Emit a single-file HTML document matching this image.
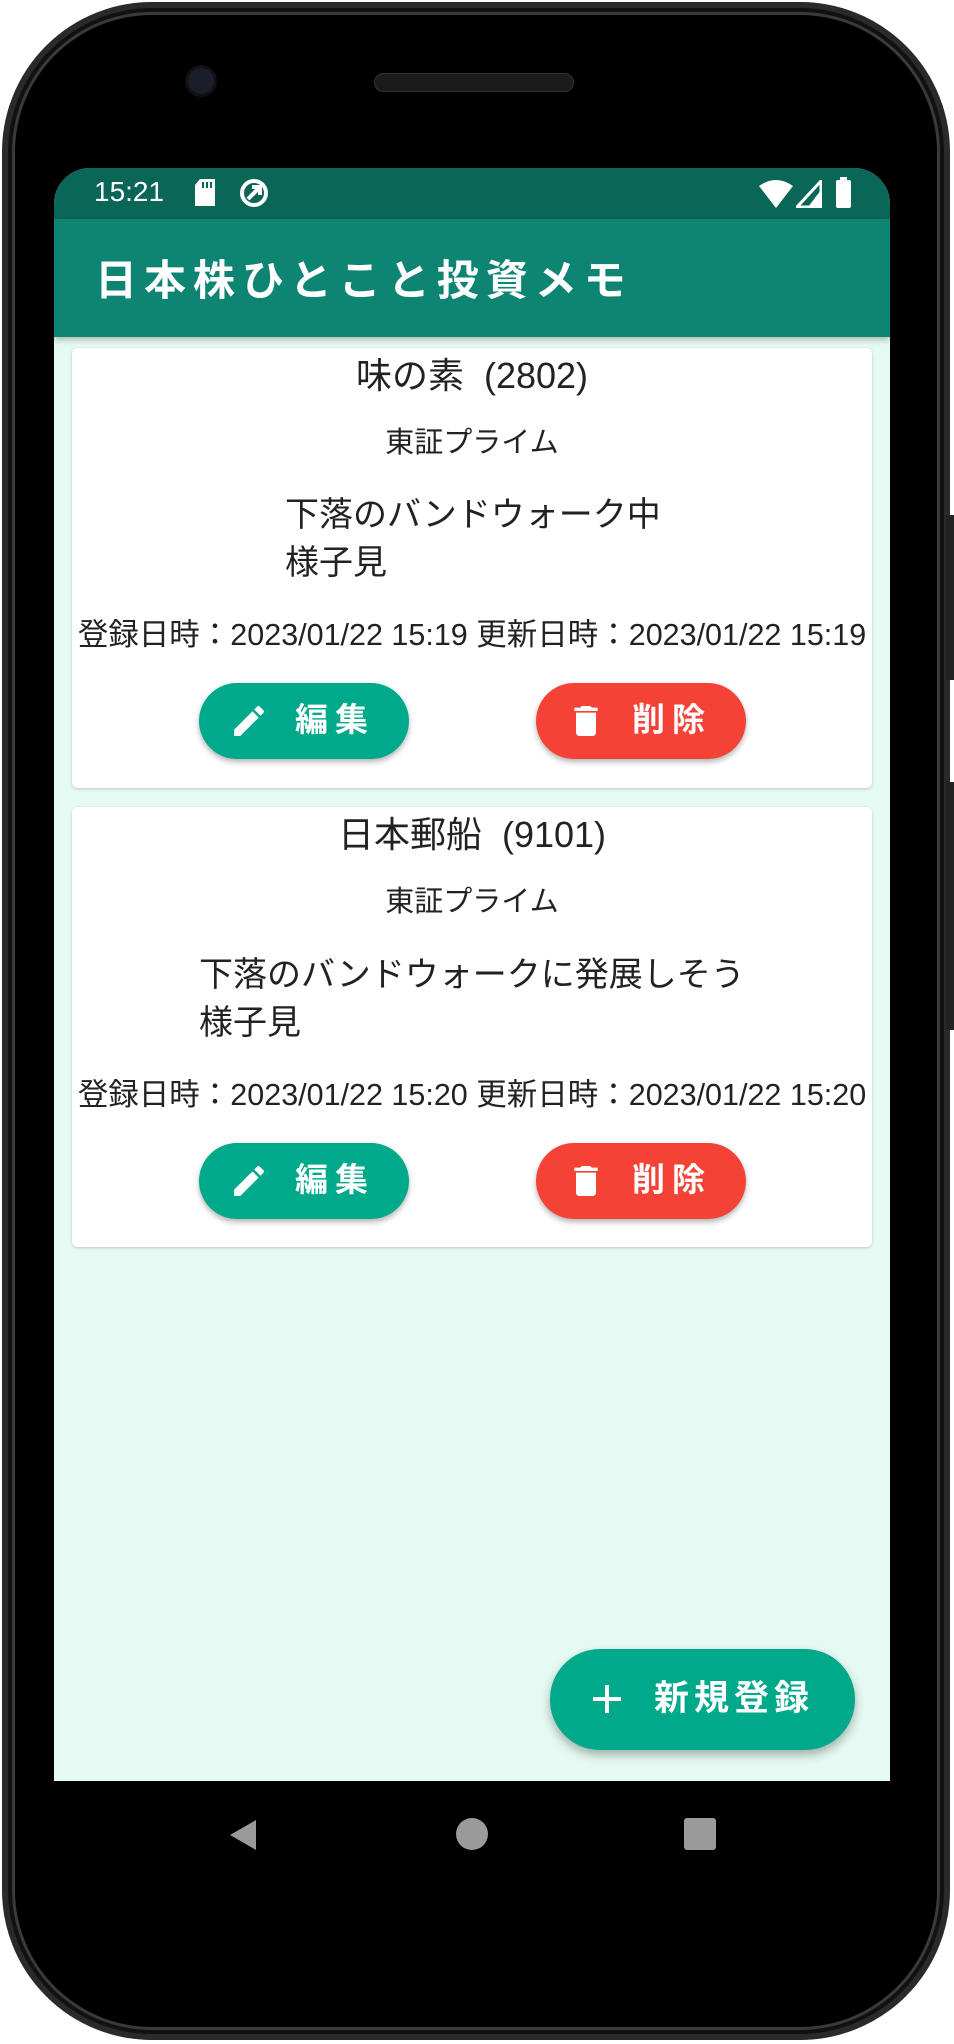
<!DOCTYPE html>
<html><head><meta charset="utf-8"><style>
*{margin:0;padding:0;box-sizing:border-box}
body{width:954px;height:2044px;background:#fff;position:relative;overflow:hidden;font-family:"Liberation Sans","Noto Sans CJK JP",sans-serif}
.phone{position:absolute;left:2px;top:2px;width:948px;height:2038px;border-radius:150px;background:#000;border:6px solid #2a2a2a;box-shadow:inset 0 0 0 4px #111,inset 0 0 0 7px #3a3a3a}
.btnside{position:absolute;background:#222;width:8px;right:0}
.screen{position:absolute;left:54px;top:168px;width:836px;height:1613px;background:#e6faf4;border-radius:36px 36px 0 0;overflow:hidden}
.status{position:absolute;left:0;top:0;width:836px;height:51px;background:#0a6656;color:#fff}
.appbar{position:absolute;left:0;top:51px;width:836px;height:118px;background:#0e8473;box-shadow:0 3px 6px rgba(0,0,0,.25)}
.appbar h1{position:absolute;left:41px;top:28px;font-size:42px;font-weight:bold;color:#fff;letter-spacing:7px;white-space:nowrap}
.card{position:absolute;left:18px;width:800px;background:#fff;border-radius:6px;box-shadow:0 1px 3px rgba(0,0,0,.2)}
.t{position:absolute;left:0;width:100%;text-align:center;color:#222;white-space:nowrap}
.memo{position:absolute;font-size:34px;line-height:48px;color:#222;white-space:nowrap}
.btn{position:absolute;width:210px;height:76px;border-radius:38px;color:#fff;font-weight:bold;font-size:33px;letter-spacing:7px;box-shadow:0 3px 6px rgba(0,0,0,.3)}
.btn span{position:absolute;left:96px;top:17px;line-height:40px}
.btn svg{position:absolute;left:30px;top:18px}
.g{background:#00a98a}.r{background:#f44336}
.d{font-size:30.5px;letter-spacing:0}
</style></head><body>
<div class="phone"></div>
<div class="btnside" style="top:515px;height:165px;right:0"></div>
<div class="btnside" style="top:782px;height:248px;right:0"></div>
<div style="position:absolute;left:188px;top:68px;width:26px;height:26px;border-radius:50%;background:#1a1d2a;box-shadow:0 0 0 3px #111"></div>
<div style="position:absolute;left:374px;top:73px;width:200px;height:19px;border-radius:10px;background:#1b1b1b;border:1px solid #333"></div>
<div class="screen">
 <div class="status">
  <div style="position:absolute;left:40px;top:8px;font-size:28px">15:21</div>
  <svg style="position:absolute;left:139px;top:10px" width="24" height="30" viewBox="0 0 24 30"><path d="M7 1h15v27H2V7z" fill="#fff"/><path d="M10 4v6M14 4v6M18 4v6" stroke="#0a6656" stroke-width="2"/></svg>
  <svg style="position:absolute;left:184px;top:9px" width="32" height="32" viewBox="0 0 32 32"><circle cx="16" cy="16" r="12" fill="none" stroke="#fff" stroke-width="4"/><path d="M10 22L20 12M14 10h8v8" fill="none" stroke="#fff" stroke-width="4"/></svg>
  <svg style="position:absolute;left:705px;top:12px" width="34" height="28" viewBox="0 0 34 28"><path d="M0 6Q17-6 34 6L17 28z" fill="#fff"/></svg>
  <svg style="position:absolute;left:742px;top:12px" width="26" height="28" viewBox="0 0 26 28"><path d="M25 1V27H1z" fill="none" stroke="#fff" stroke-width="3"/><path d="M25 10V27H12z" fill="#fff"/></svg>
  <div style="position:absolute;left:782px;top:12px;width:15px;height:28px;background:#fff;border-radius:2px"></div>
  <div style="position:absolute;left:786px;top:9px;width:7px;height:4px;background:#fff"></div>
 </div>
 <div class="appbar"><h1>日本株ひとこと投資メモ</h1></div>

 <div class="card" style="top:180px;height:440px">
  <div class="t" style="top:4px;font-size:36px;line-height:48px">味の素&nbsp; (2802)</div>
  <div class="t" style="top:75px;font-size:29px;line-height:40px">東証プライム</div>
  <div class="memo" style="left:213px;top:143px">下落のバンドウォーク中<br>様子見</div>
  <div class="t d" style="top:267px;line-height:40px">登録日時：2023/01/22 15:19 更新日時：2023/01/22 15:19</div>
  <div class="btn g" style="left:127px;top:335px"><svg width="40" height="40" viewBox="0 0 24 24"><path d="M3 17.25V21h3.75L17.81 9.94l-3.75-3.75L3 17.25zM20.71 7.04a1 1 0 000-1.41l-2.34-2.34a1 1 0 00-1.41 0l-1.83 1.830 3.75 3.75 1.83-1.83z" fill="#fff"/></svg><span>編集</span></div>
  <div class="btn r" style="left:464px;top:335px"><svg width="40" height="40" viewBox="0 0 24 24"><path d="M6 19c0 1.1.9 2 2 2h8c1.1 0 2-.9 2-2V7H6v12zM19 4h-3.5l-1-1h-5l-1 1H5v2h14V4z" fill="#fff"/></svg><span>削除</span></div>
 </div>

 <div class="card" style="top:639px;height:440px">
  <div class="t" style="top:4px;font-size:36px;line-height:48px">日本郵船&nbsp; (9101)</div>
  <div class="t" style="top:75px;font-size:29px;line-height:40px">東証プライム</div>
  <div class="memo" style="left:127px;top:144px">下落のバンドウォークに発展しそう<br>様子見</div>
  <div class="t d" style="top:268px;line-height:40px">登録日時：2023/01/22 15:20 更新日時：2023/01/22 15:20</div>
  <div class="btn g" style="left:127px;top:336px"><svg width="40" height="40" viewBox="0 0 24 24"><path d="M3 17.25V21h3.75L17.81 9.94l-3.75-3.75L3 17.25zM20.71 7.04a1 1 0 000-1.41l-2.34-2.34a1 1 0 00-1.41 0l-1.83 1.83 3.75 3.75 1.83-1.83z" fill="#fff"/></svg><span>編集</span></div>
  <div class="btn r" style="left:464px;top:336px"><svg width="40" height="40" viewBox="0 0 24 24"><path d="M6 19c0 1.1.9 2 2 2h8c1.1 0 2-.9 2-2V7H6v12zM19 4h-3.5l-1-1h-5l-1 1H5v2h14V4z" fill="#fff"/></svg><span>削除</span></div>
 </div>

 <div style="position:absolute;left:496px;top:1481px;width:305px;height:101px;border-radius:50px;background:#00a98a;box-shadow:0 5px 10px rgba(0,0,0,.3);color:#fff">
  <svg style="position:absolute;left:42px;top:35px" width="30" height="30" viewBox="0 0 30 30"><path d="M15 1v28M1 15h28" stroke="#fff" stroke-width="4"/></svg>
  <span style="position:absolute;left:104px;top:27px;font-size:35px;font-weight:bold;letter-spacing:5px;line-height:46px">新規登録</span>
 </div>
</div>
<svg style="position:absolute;left:226px;top:1818px" width="34" height="34" viewBox="0 0 34 34"><path d="M30 2L4 17l26 15z" fill="#9a9a9a"/></svg>
<div style="position:absolute;left:456px;top:1818px;width:32px;height:32px;border-radius:50%;background:#9a9a9a"></div>
<div style="position:absolute;left:684px;top:1818px;width:32px;height:32px;border-radius:3px;background:#9a9a9a"></div>
</body></html>
